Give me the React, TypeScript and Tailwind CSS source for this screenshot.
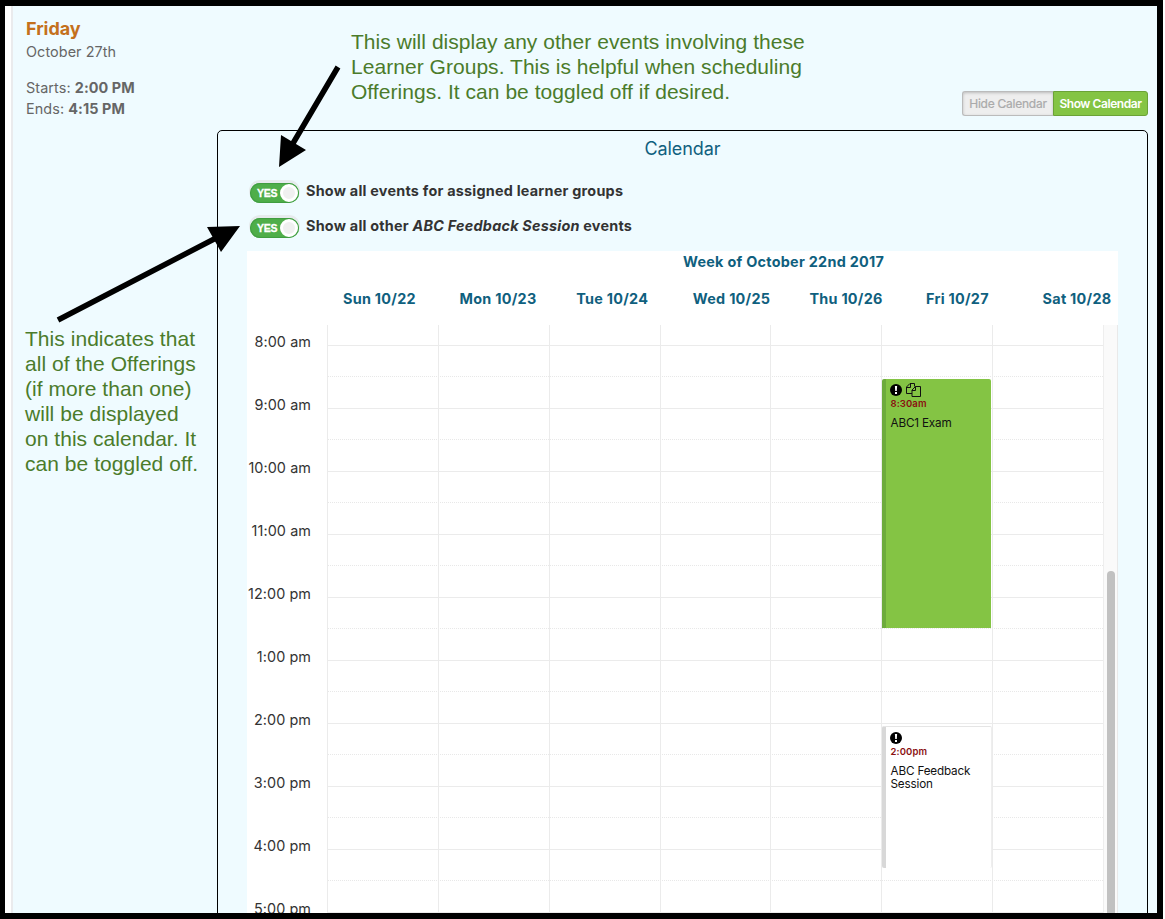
import React from "react";

const LABELS = ["8:00 am", "9:00 am", "10:00 am", "11:00 am", "12:00 pm", "1:00 pm", "2:00 pm", "3:00 pm", "4:00 pm", "5:00 pm"];
const DAYS = ["Sun 10/22", "Mon 10/23", "Tue 10/24", "Wed 10/25", "Thu 10/26", "Fri 10/27", "Sat 10/28"];

function Toggle({ children }: { children: React.ReactNode }) {
  return (
    <div className="flex h-[35px] items-start">
      <div className="mt-[2px] flex h-[20px] w-[49px] items-center justify-between rounded-full bg-[#4fae4a] pl-[7px] shadow-[inset_0_0_1px_1px_#3f9c40,0_-2px_0_1px_#e6ebed]">
        <span className="font-['Liberation_Sans',sans-serif] text-[10.500px] font-bold leading-none tracking-[-0.2px] text-white [-webkit-text-stroke:0.3px_white]">YES</span>
        <span className="mr-px size-[18px] rounded-full border-[3px] border-white bg-[#f0f0f0]" />
      </div>
      <span className="ml-[7px] whitespace-nowrap text-[14.400px] font-bold leading-5 tracking-[0.23px] text-[#333]">{children}</span>
    </div>
  );
}

function Exclaim() {
  return (
    <svg className="-ml-[0.5px]" width="12" height="12" viewBox="0 0 12 12">
      <circle cx="6" cy="6" r="6" fill="#000" />
      <path d="M4.900 2h2.200l-.3 4.900H5.200zM5 8h2v1.900H5z" fill="#fff" />
    </svg>
  );
}

function Copies() {
  return (
    <svg width="15" height="14" viewBox="0 0 15 14" fill="none" stroke="#111" strokeWidth="1">
      <path d="M6 10.500H.500V4L4 .500h4.500v3M4.500.500v4h-4" />
      <path d="M9.500 3.500h5v10h-8.500V7zM9.500 3.500v4H6" />
    </svg>
  );
}

export default function App() {
  return (
    <div className="h-[919px] w-[1163px] overflow-hidden border-b-[6px] border-l-[5px] border-r-[6px] border-t-[6px] border-black bg-white font-['Inter',sans-serif]">
      <div className="relative ml-[6px] flex h-[907px] border-l-2 border-[#eaebed] bg-[#effbff]">
        <aside className="w-[204px] shrink-0 pl-[13px] pt-[12px] text-[#666]">
          <div className="text-[18px] font-bold leading-[22px] tracking-[-0.05px] text-[#c4701c]">Friday</div>
          <div className="mt-[2px] text-[14.400px] leading-5 tracking-[0.08px]">October 27th</div>
          <div className="mt-[15px] text-[14.400px] leading-[21px] tracking-[0.08px]">
            <div>Starts: <b>2:00 PM</b></div>
            <div>Ends: <b>4:15 PM</b></div>
          </div>
          <p className="-ml-px mt-[207px] whitespace-pre font-['Liberation_Sans',sans-serif] text-[21px] leading-[25px] tracking-[0.04px] text-[#4b7b2b]">{"This indicates that\nall of the Offerings\n(if more than one)\nwill be displayed\non this calendar. It\ncan be toggled off."}</p>
        </aside>
        <main className="w-[931px] shrink-0">
          <div className="flex h-[124px] justify-between pl-[134px]">
            <p className="whitespace-pre pt-[23px] font-['Liberation_Sans',sans-serif] text-[21px] leading-[25px] tracking-[0.04px] text-[#4b7b2b]">{"This will display any other events involving these\nLearner Groups. This is helpful when scheduling\nOfferings. It can be toggled off if desired."}</p>
            <div className="mt-[85px] flex h-[25px] text-[12px] leading-[23px]">
              <button className="w-[91px] whitespace-nowrap rounded-l-[3px] border border-r-0 border-[#bbb] bg-[#eee] tracking-[-0.25px] text-[#aaa] shadow-[inset_0_1px_3px_#bbb] [-webkit-text-stroke:0.2px_#aaa]">Hide Calendar</button>
              <button className="w-[95px] whitespace-nowrap rounded-r-[3px] border border-[#6ba237] bg-[#84c444] font-semibold tracking-[-0.43px] text-white">Show Calendar</button>
            </div>
          </div>
          <section className="h-[800px] rounded-t-[5px] border border-black pl-[29px]">
            <h2 className="h-[50px] w-[871px] pt-[6px] text-center text-[18px] leading-[24px] tracking-[-0.08px] text-[#0f607e]">Calendar</h2>
            <div className="h-[70px] pl-[3px]">
              <Toggle>Show all events for assigned learner groups</Toggle>
              <Toggle>Show all other <i>ABC Feedback Session</i> events</Toggle>
            </div>
            <div className="w-[871px] bg-white">
              <div className="h-[74px] text-[14.400px] font-bold tracking-[0.27px] text-[#0f607e]">
                <div className="h-[38px] pl-[202px] text-center leading-[22px]">Week of October 22nd 2017</div>
                <div className="grid grid-cols-[repeat(7,116.6px)] pl-[96px] leading-5">
                  {DAYS.map((d) => <span key={d} className="whitespace-nowrap">{d}</span>)}
                </div>
              </div>
              <div className="flex h-[600px] overflow-hidden">
                <div className="w-[80px] shrink-0 pr-[16px] pt-[7px] text-[14.400px] tracking-[0.08px] text-[#333]">
                  {LABELS.map((l) => <div key={l} className="flex h-[63px] justify-end whitespace-nowrap leading-5">{l}</div>)}
                </div>
                <div className="relative flex w-[777px] shrink-0 flex-col border-r border-[#eee] pt-[20px]">
                  {LABELS.map((l) => (
                    <div key={l} className="h-[63px] shrink-0 border-t border-[#ebebeb]">
                      <div className="h-[31px] border-b border-dotted border-[#e8e8e8]" />
                    </div>
                  ))}
                  <div className="absolute inset-0 grid grid-cols-7">
                    {DAYS.map((d) => <div key={d} className="border-l border-[#ebebeb]" />)}
                  </div>
                  <div className="absolute left-[555px] top-[54px] h-[249px] w-[109px] rounded-t-[2px] border-l-4 border-[#6dab3c] bg-[#84c444] pl-[4.5px] pt-[4px]">
                    <div className="flex h-[14px] items-start gap-[4px]"><span className="pt-px"><Exclaim /></span><Copies /></div>
                    <div className="text-[9.500px] font-semibold leading-[13px] tracking-[0.1px] text-[#8a1010]">8:30am</div>
                    <div className="mt-[7px] text-[11.700px] leading-[13px] tracking-[-0.16px] text-[#111]">ABC1 Exam</div>
                  </div>
                  <div className="absolute left-[555px] top-[401px] h-[142px] w-[110px] rounded-[2px] border-l-4 border-r border-t border-l-[#d8d8d8] border-r-[#eee] border-t-[#e5e5e5] bg-white pl-[4.5px] pt-[5px]">
                    <Exclaim />
                    <div className="mt-px text-[9.500px] font-semibold leading-[13px] tracking-[0.1px] text-[#8a1010]">2:00pm</div>
                    <div className="mt-[7px] text-[11.700px] leading-[13px] tracking-[-0.16px] text-[#111]">ABC Feedback<br />Session</div>
                  </div>
                </div>
                <div className="w-[14px] border-r border-[#e9e9e9] bg-[#fafafa] pl-[3px] pt-[246px]">
                  <div className="h-[360px] w-2 rounded-full bg-[#c1c1c1]" />
                </div>
              </div>
            </div>
          </section>
        </main>
        <svg className="absolute left-[-8px] top-0" width="360" height="330" viewBox="5 6 360 330">
          <path d="M338 67L292 145M58 320L218 237" stroke="#000" strokeWidth="5.500" />
          <path d="M279 167L281 135L306 150zM240 226L207 227L221 252z" />
        </svg>
      </div>
    </div>
  );
}
